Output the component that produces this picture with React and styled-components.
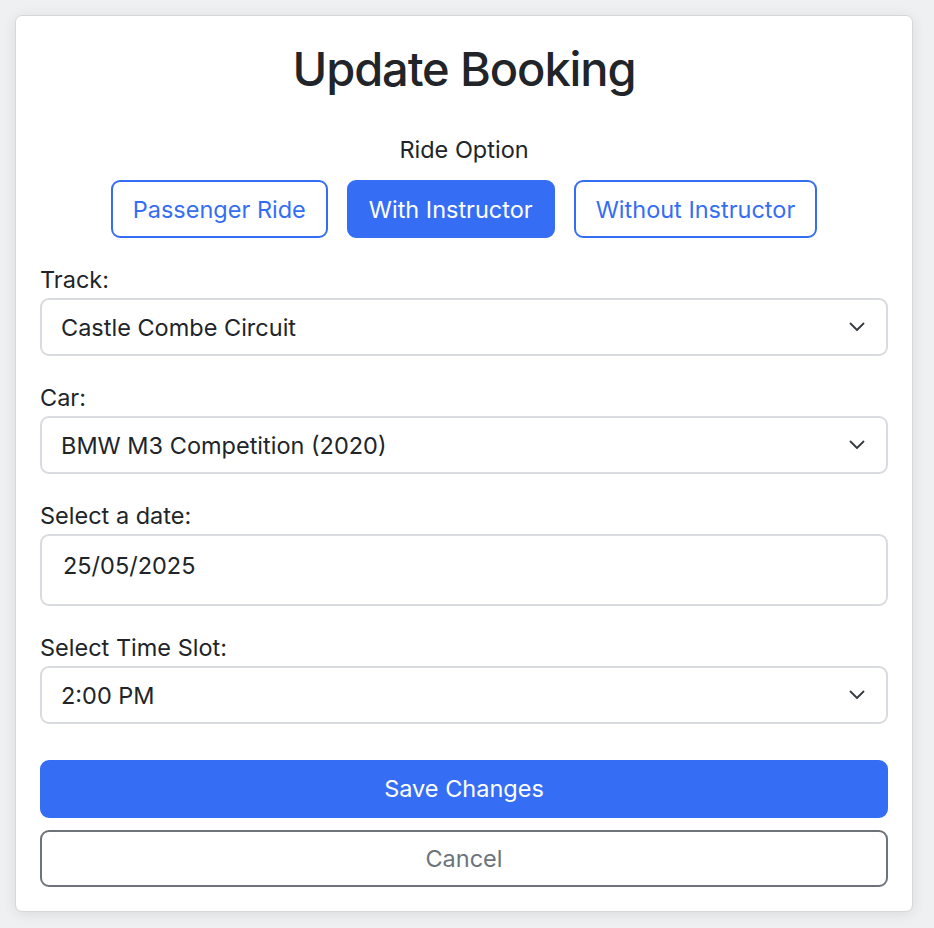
import React, { useState } from "react";
import styled, { createGlobalStyle } from "styled-components";

const Global = createGlobalStyle`
  html, body { margin: 0; padding: 0; background: #eff0f1; }
  body { font-family: Inter, "Noto Sans", "Liberation Sans", sans-serif; color: #212529; }
  * { box-sizing: border-box; }
`;

const Page = styled.div`
  padding: 15px 21px 16px 15px;
  min-height: 928px;
`;

const Card = styled.form`
  width: 898px;
  height: 897px;
  background: #fff;
  border: 1px solid #d6d7d8;
  border-radius: 7px;
  box-shadow: 0 2px 14px rgba(0, 0, 0, 0.09);
  padding: 24px 24px 24px;
  display: flex;
  flex-direction: column;
`;

const Title = styled.h2`
  margin: 0 0 34px;
  text-align: center;
  font-size: 47px;
  font-weight: 500;
  line-height: 58px;
  letter-spacing: -1.1px;
  color: #212529;
`;

const OptionLabel = styled.div`
  text-align: center;
  font-size: 23.5px;
  line-height: 36px;
  margin-bottom: 12px;
`;

const OptionRow = styled.div`
  display: flex;
  justify-content: center;
  gap: 19px;
  margin-bottom: 24px;
`;

const OptionButton = styled.button`
  height: 58px;
  padding: 0 20px;
  font-family: inherit;
  font-size: 23.5px;
  border-radius: 9px;
  border: 2px solid #356ef4;
  background: ${(p) => (p.$active ? "#356ef4" : "#fff")};
  color: ${(p) => (p.$active ? "#fff" : "#356ef4")};
  cursor: pointer;
`;

const Field = styled.div`
  display: flex;
  flex-direction: column;
  margin-bottom: ${(p) => p.$mb || 24}px;
`;

const Label = styled.label`
  font-size: 23.5px;
  line-height: 36px;
  color: #212529;
`;

const SelectWrap = styled.div`
  position: relative;
`;

const Select = styled.select`
  appearance: none;
  -webkit-appearance: none;
  width: 100%;
  height: 58px;
  padding: 0 60px 0 19px;
  font-family: inherit;
  font-size: 23.5px;
  color: #212529;
  background: #fff;
  border: 2px solid #d8dbdf;
  border-radius: 9px;
  outline: none;
`;

const Chevron = styled.svg`
  position: absolute;
  right: 23px;
  top: 50%;
  transform: translateY(-50%);
  pointer-events: none;
`;

const DateInput = styled.input`
  width: 100%;
  height: 72px;
  padding: 11px 21px 21px;
  font-family: inherit;
  font-size: 23.5px;
  line-height: 36px;
  color: #212529;
  background: #fff;
  border: 2px solid #d8dbdf;
  border-radius: 9px;
  outline: none;
`;

const ActionButton = styled.button`
  width: 100%;
  height: 58px;
  font-family: inherit;
  font-size: 23.5px;
  border-radius: 9px;
  cursor: pointer;
  border: 2px solid ${(p) => (p.$primary ? "#356ef4" : "#6c737b")};
  background: ${(p) => (p.$primary ? "#356ef4" : "#fff")};
  color: ${(p) => (p.$primary ? "#fff" : "#6c737b")};
  margin-bottom: ${(p) => p.$mb || 0}px;
`;

function SelectField({ label, value, options, mb }) {
  return (
    <Field $mb={mb}>
      <Label>{label}</Label>
      <SelectWrap>
        <Select defaultValue={value}>
          {options.map((o) => (
            <option key={o}>{o}</option>
          ))}
        </Select>
        <Chevron width="16" height="10" viewBox="0 0 16 10">
          <path d="M1.5 1.5 L8 8 L14.5 1.5" fill="none" stroke="#343a40" strokeWidth="1.8" strokeLinecap="round" strokeLinejoin="round" />
        </Chevron>
      </SelectWrap>
    </Field>
  );
}

export default function App() {
  const [ride, setRide] = useState("With Instructor");
  const rides = ["Passenger Ride", "With Instructor", "Without Instructor"];
  return (
    <Page>
      <Global />
      <Card onSubmit={(e) => e.preventDefault()}>
        <Title>Update Booking</Title>
        <OptionLabel>Ride Option</OptionLabel>
        <OptionRow>
          {rides.map((r) => (
            <OptionButton type="button" key={r} $active={ride === r} onClick={() => setRide(r)}>
              {r}
            </OptionButton>
          ))}
        </OptionRow>
        <SelectField label="Track:" value="Castle Combe Circuit" options={["Castle Combe Circuit", "Silverstone", "Brands Hatch"]} />
        <SelectField label="Car:" value="BMW M3 Competition (2020)" options={["BMW M3 Competition (2020)", "Porsche 911 GT3"]} />
        <Field>
          <Label>Select a date:</Label>
          <DateInput type="text" readOnly value="25/05/2025" />
        </Field>
        <SelectField label="Select Time Slot:" value="2:00 PM" options={["10:00 AM", "12:00 PM", "2:00 PM", "4:00 PM"]} mb={36} />
        <ActionButton type="submit" $primary $mb={12}>Save Changes</ActionButton>
        <ActionButton type="button">Cancel</ActionButton>
      </Card>
    </Page>
  );
}
